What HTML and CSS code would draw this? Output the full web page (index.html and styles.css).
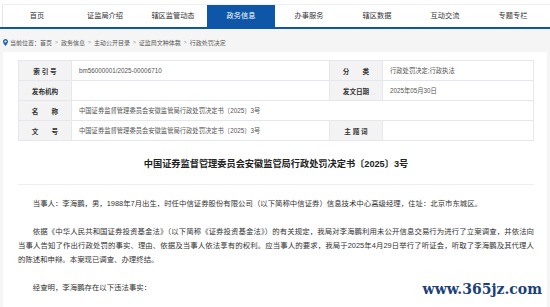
FILE: index.html
```html
<!DOCTYPE html>
<html lang="zh-CN">
<head>
    <meta charset="UTF-8">
    <meta name="viewport" content="width=device-width, initial-scale=1.0">
    <title>中国证券监督管理委员会安徽监管局行政处罚决定书〔2025〕3号</title>
    <link rel="stylesheet" href="styles.css">
</head>
<body>
    <div class="header">
        <ul class="nav">
            <li><a href="#">首页</a></li>
            <li><a href="#">证监局介绍</a></li>
            <li><a href="#">辖区监管动态</a></li>
            <li class="active"><a href="#">政务信息</a></li>
            <li><a href="#">办事服务</a></li>
            <li><a href="#">辖区数据</a></li>
            <li><a href="#">互动交流</a></li>
            <li><a href="#">专题专栏</a></li>
        </ul>
    </div>
    <div class="crumb">
        <svg class="pin" viewBox="0 0 10 14" width="5" height="7">
            <path d="M5 0C2.2 0 0 2.2 0 5c0 3.6 5 9 5 9s5-5.4 5-9c0-2.8-2.2-5-5-5zm0 7.2A2.2 2.2 0 1 1 5 2.8a2.2 2.2 0 0 1 0 4.4z" fill="#1d63b8"/>
        </svg>
        <span>当前位置：</span>
        <a href="#">首页</a><span class="sep">&gt;</span>
        <a href="#">政务信息</a><span class="sep">&gt;</span>
        <a href="#">主动公开目录</a><span class="sep">&gt;</span>
        <a href="#">证监局文种体裁</a><span class="sep">&gt;</span>
        <a href="#">行政处罚决定</a>
    </div>
    <div class="main">
        <table class="info">
            <tr>
                <th>索 引 号</th>
                <td class="wide">bm56000001/2025-00006710</td>
                <th>分　　类</th>
                <td>行政处罚决定;行政执法</td>
            </tr>
            <tr>
                <th>发布机构</th>
                <td class="wide"></td>
                <th>发文日期</th>
                <td>2025年05月30日</td>
            </tr>
            <tr>
                <th>名　　称</th>
                <td colspan="3">中国证券监督管理委员会安徽监管局行政处罚决定书〔2025〕3号</td>
            </tr>
            <tr>
                <th>文　　号</th>
                <td class="wide">中国证券监督管理委员会安徽监管局行政处罚决定书〔2025〕3号</td>
                <th>主 题 词</th>
                <td></td>
            </tr>
        </table>
        <h1 class="doc-title">中国证券监督管理委员会安徽监管局行政处罚决定书〔2025〕3号</h1>
        <div class="doc-body">
            <p>当事人：李海鹏，男，1988年7月出生，时任中信证券股份有限公司（以下简称中信证券）信息技术中心高级经理，住址：北京市东城区。</p>
            <p>依据《中华人民共和国证券投资基金法》（以下简称《证券投资基金法》）的有关规定，我局对李海鹏利用未公开信息交易行为进行了立案调查，并依法向当事人告知了作出行政处罚的事实、理由、依据及当事人依法享有的权利。应当事人的要求，我局于2025年4月29日举行了听证会，听取了李海鹏及其代理人的陈述和申辩。本案现已调查、办理终结。</p>
            <p>经查明，李海鹏存在以下违法事实：</p>
            <p>一、李海鹏控制使用证券账户情况</p>
        </div>
    </div>
    <div class="watermark">www.365jz.com</div>
</body>
</html>
```

FILE: styles.css
```css
body {
    margin: 0;
    background: #f5f5f5;
    font-family: "Liberation Sans", "Noto Sans CJK SC", sans-serif;
    color: #333;
    overflow: hidden;
}
a {
    color: inherit;
    text-decoration: none;
}
.header {
    background: #fff;
    padding-top: 4px;
    border-bottom: 2px solid #0d56a8;
}
.nav {
    display: flex;
    list-style: none;
    margin: 0 0 0 2px;
    padding: 0;
    border-top: 1px solid #eceff3;
    border-left: 1px solid #e3e6ea;
}
.nav li {
    width: 68px;
    height: 22px;
    line-height: 22px;
    text-align: center;
    font-size: 7.2px;
    color: #333;
}
.nav li.active {
    background: #0d56a8;
    color: #fff;
}
.crumb {
    display: flex;
    align-items: center;
    height: 14px;
    padding: 6px 0 3px 3px;
    font-size: 6px;
    color: #555;
}
.crumb .pin {
    margin-right: 2px;
}
.crumb .sep {
    margin: 0 3px;
    font-size: 5px;
    color: #888;
}
.main {
    background: #fff;
    margin: 0 3px;
    padding: 8px 13px 20px 15px;
    min-height: 300px;
}
.info {
    width: 516px;
    border-collapse: collapse;
    table-layout: fixed;
}
.info th, .info td {
    height: 19px;
    border: 1px solid #e4e8ed;
    padding: 0;
}
.info th {
    width: 52px;
    background: #f3f3f3;
    font-size: 6.6px;
    font-weight: bold;
    color: #333;
    text-align: center;
    white-space: pre;
}
.info td {
    padding-left: 7px;
    font-size: 6.3px;
    color: #555;
}
.info td.wide {
    width: 250px;
}
.doc-title {
    margin: 15px 0 0;
    padding-bottom: 12px;
    border-bottom: 1px solid #eeeeee;
    font-size: 9.2px;
    line-height: 16px;
    text-align: center;
    color: #222;
}
.doc-body {
    padding-top: 12px;
}
.doc-body p {
    margin: 0 0 14px;
    font-size: 7.4px;
    line-height: 14px;
    text-indent: 2em;
    text-align: justify;
    color: #333;
}
.watermark {
    position: absolute;
    right: 8px;
    top: 281px;
    font-family: "DejaVu Serif", serif;
    font-weight: bold;
    font-size: 14px;
    color: #1d3f78;
    text-shadow: 0 0 2px #fff;
}
```
